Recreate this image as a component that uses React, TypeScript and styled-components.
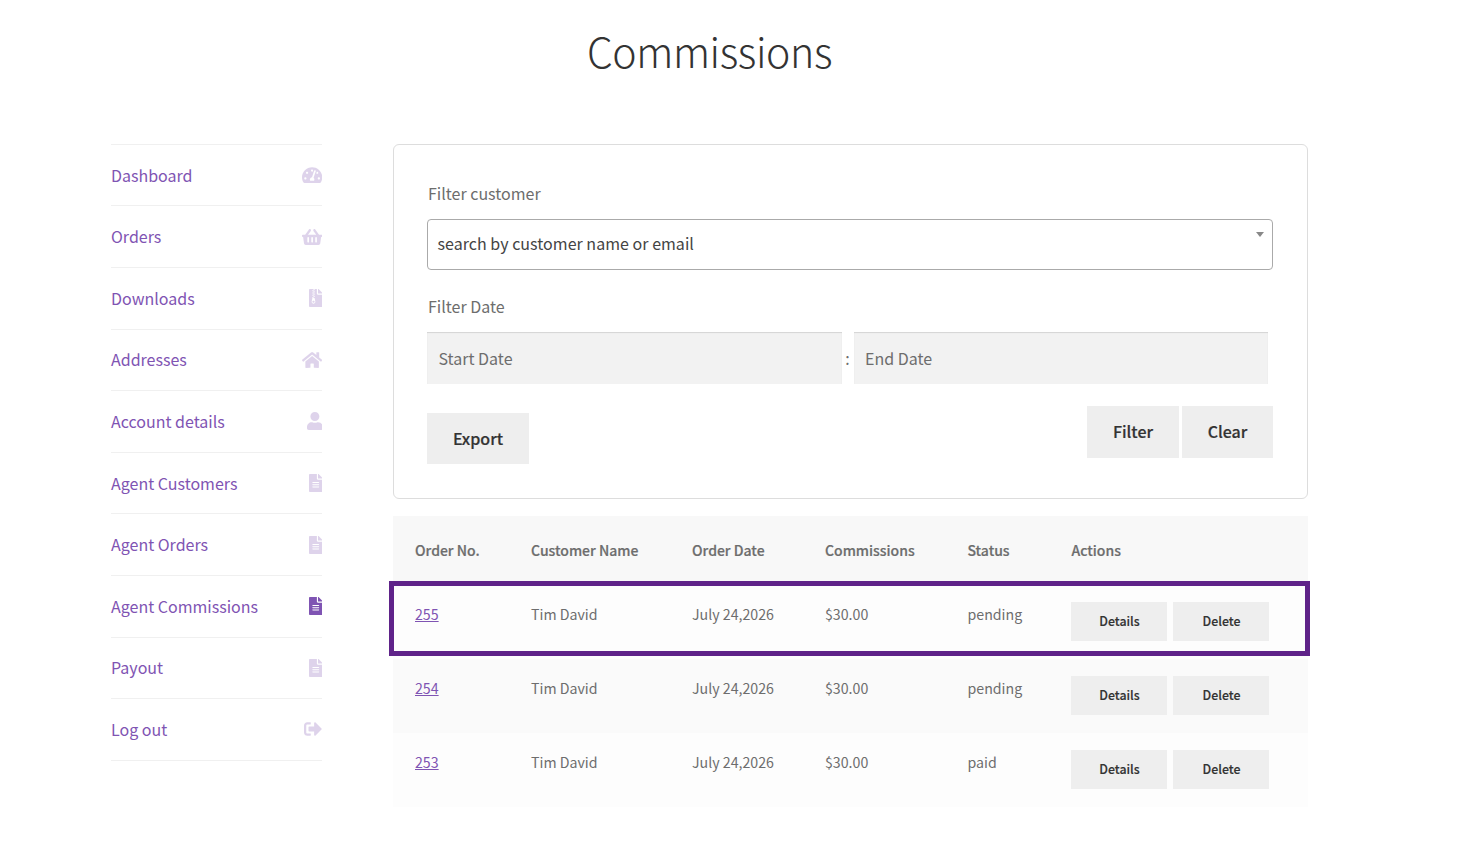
import React from "react";
import styled, { createGlobalStyle } from "styled-components";
import {
  FaTachometerAlt,
  FaShoppingBasket,
  FaFileArchive,
  FaHome,
  FaUser,
  FaFileAlt,
  FaSignOutAlt,
} from "react-icons/fa";

const navItems = [
  { label: "Dashboard", icon: FaTachometerAlt, width: 20.25 },
  { label: "Orders", icon: FaShoppingBasket, width: 20.25 },
  { label: "Downloads", icon: FaFileArchive, width: 13.5 },
  { label: "Addresses", icon: FaHome, width: 20.25 },
  { label: "Account details", icon: FaUser, width: 15.75 },
  { label: "Agent Customers", icon: FaFileAlt, width: 13.5 },
  { label: "Agent Orders", icon: FaFileAlt, width: 13.5 },
  { label: "Agent Commissions", icon: FaFileAlt, width: 13.5, active: true },
  { label: "Payout", icon: FaFileAlt, width: 13.5 },
  { label: "Log out", icon: FaSignOutAlt, width: 18 },
];

const orders = [
  { id: 255, status: "pending" },
  { id: 254, status: "pending" },
  { id: 253, status: "paid" },
];

const columns = [
  "Order No.",
  "Customer Name",
  "Order Date",
  "Commissions",
  "Status",
  "Actions",
];

const App: React.FC = () => {
  return (
    <Page>
      <GlobalStyle />
      <Title>Commissions</Title>
      <Columns>
        <Nav>
          {navItems.map((item) => (
            <NavItem key={item.label}>
              <NavLink href="#">{item.label}</NavLink>
              <NavIcon $active={item.active} $width={item.width}>
                <item.icon />
              </NavIcon>
            </NavItem>
          ))}
        </Nav>
        <Main>
          <FilterCard>
            <FieldLabel>Filter customer</FieldLabel>
            <SelectBox>
              search by customer name or email
              <SelectArrow />
            </SelectBox>
            <DateLabel>Filter Date</DateLabel>
            <DateRow>
              <DateInput placeholder="Start Date" />
              <Colon>:</Colon>
              <DateInput placeholder="End Date" />
            </DateRow>
            <ButtonRow>
              <ExportButton>Export</ExportButton>
              <RightButtons>
                <FilterButton $width={92}>Filter</FilterButton>
                <FilterButton $width={91}>Clear</FilterButton>
              </RightButtons>
            </ButtonRow>
          </FilterCard>
          <Table>
            <HeadRow>
              {columns.map((c) => (
                <HeadCell key={c}>{c}</HeadCell>
              ))}
            </HeadRow>
            {orders.map((order) => (
              <BodyRow key={order.id}>
                <Cell>
                  <OrderLink href="#">{order.id}</OrderLink>
                </Cell>
                <Cell>Tim David</Cell>
                <Cell>July 24,2026</Cell>
                <Cell>$30.00</Cell>
                <Cell>{order.status}</Cell>
                <Actions>
                  <ActionButton>Details</ActionButton>
                  <ActionButton>Delete</ActionButton>
                </Actions>
              </BodyRow>
            ))}
            <Highlight />
          </Table>
        </Main>
      </Columns>
    </Page>
  );
};

const fontStack = `"Noto Sans CJK SC", "Source Sans Pro", "Open Sans", sans-serif`;

const GlobalStyle = createGlobalStyle`
  html, body {
    margin: 0;
    padding: 0;
    background: #fff;
  }
  body {
    font-family: ${fontStack};
    color: #6d6d6d;
  }
  * {
    box-sizing: border-box;
  }
`;

const Page = styled.div`
  width: 1197px;
  margin-left: 111px;
`;

const Title = styled.h1`
  margin: 0;
  height: 144px;
  padding-top: 21px;
  font-size: 41px;
  line-height: 58px;
  font-weight: 300;
  color: #333;
  text-align: center;
  letter-spacing: -0.4px;
`;

const Columns = styled.div`
  display: flex;
  gap: 71px;
  align-items: flex-start;
`;

const Nav = styled.ul`
  width: 211px;
  margin: -0.2px 0 0;
  padding: 0;
  list-style: none;
  border-top: 1px solid #f0f0f0;
`;

const NavItem = styled.li`
  display: flex;
  align-items: center;
  justify-content: space-between;
  height: 61.6px;
  border-bottom: 1px solid #f0f0f0;
`;

const NavLink = styled.a`
  font-size: 16px;
  line-height: 24px;
  margin-top: -1px;
  color: #7f54b3;
  text-decoration: none;
`;

const NavIcon = styled.span<{ $active?: boolean; $width: number }>`
  display: flex;
  align-items: center;
  margin-right: -0.3px;
  color: #7f54b3;
  opacity: ${(props) => (props.$active ? 1 : 0.25)};

  svg {
    width: ${(props) => props.$width}px;
    height: 18px;
  }
`;

const Main = styled.div`
  width: 915px;
`;

const FilterCard = styled.div`
  height: 355px;
  padding: 35px 34px 0 33px;
  border: 1px solid #ddd;
  border-radius: 6px;
`;

const FieldLabel = styled.div`
  height: 39px;
  padding-left: 1px;
  font-size: 16px;
  line-height: 26px;
`;

const SelectBox = styled.div`
  position: relative;
  height: 51px;
  padding-left: 9.5px;
  border: 1px solid #aaa;
  border-radius: 4px;
  font-size: 16px;
  line-height: 46px;
  letter-spacing: 0.03px;
  color: #444;
`;

const SelectArrow = styled.span`
  position: absolute;
  top: 12px;
  right: 8px;
  border-left: 4px solid transparent;
  border-right: 4px solid transparent;
  border-top: 5px solid #888;
`;

const DateLabel = styled(FieldLabel)`
  box-sizing: content-box;
  height: 26px;
  padding-top: 23px;
  padding-bottom: 13px;
`;

const DateRow = styled.div`
  display: flex;
  align-items: center;
  width: 841px;
`;

const DateInput = styled.input`
  flex: 1;
  min-width: 0;
  height: 52px;
  padding: 0 11.5px;
  border: none;
  box-shadow: inset 0 1px 1px rgba(0, 0, 0, 0.125);
  background: #f2f2f2;
  font-family: ${fontStack};
  font-size: 16px;
  color: #6d6d6d;

  &::placeholder {
    color: #6d6d6d;
    opacity: 1;
  }
`;

const Colon = styled.span`
  width: 12px;
  text-align: center;
  font-size: 16px;
`;

const ButtonRow = styled.div`
  display: flex;
  justify-content: space-between;
  align-items: flex-start;
  margin-top: 22px;
`;

const ExportButton = styled.button`
  width: 102px;
  height: 51px;
  margin-top: 7px;
  padding: 0 0 2px;
  border: none;
  background: #eee;
  font-family: ${fontStack};
  font-size: 16px;
  font-weight: 500;
  -webkit-text-stroke: 0.2px #333;
  color: #333;
`;

const RightButtons = styled.div`
  display: flex;
  gap: 3px;
`;

const FilterButton = styled.button<{ $width: number }>`
  width: ${(props) => props.$width}px;
  height: 52px;
  padding: 0 0 2px;
  border: none;
  background: #eee;
  font-family: ${fontStack};
  font-size: 16px;
  font-weight: 500;
  -webkit-text-stroke: 0.2px #333;
  color: #333;
`;

const Table = styled.div`
  position: relative;
  margin-top: 17px;
`;

const gridColumns = "116px 161px 133px 142.5px 104px 1fr";

const HeadRow = styled.div`
  display: grid;
  grid-template-columns: ${gridColumns};
  height: 69px;
  padding: 23px 0 0 22px;
  background: #f8f8f8;
`;

const HeadCell = styled.div`
  font-size: 14px;
  font-weight: 500;
  -webkit-text-stroke: 0.2px #6d6d6d;
  line-height: 22px;
`;

const BodyRow = styled.div`
  display: grid;
  grid-template-columns: ${gridColumns};
  height: 74px;
  padding: 16px 0 0 22px;
  background: #fdfdfd;

  &:nth-child(3) {
    background: #fafafa;
  }
`;

const Cell = styled.div`
  font-size: 14.2px;
  line-height: 26px;
`;

const OrderLink = styled.a`
  color: #7f54b3;
  text-decoration: underline;
`;

const Actions = styled.div`
  display: flex;
  gap: 6px;
  padding-top: 1px;
  margin-left: -0.5px;
`;

const ActionButton = styled.button`
  width: 96px;
  height: 39px;
  border: none;
  padding: 0 0 2px 1px;
  background: #eee;
  font-family: ${fontStack};
  font-size: 12.4px;
  font-weight: 500;
  -webkit-text-stroke: 0.15px #333;
  color: #333;
`;

const Highlight = styled.div`
  position: absolute;
  top: 65px;
  left: -4px;
  width: 921px;
  height: 75px;
  border: 5px solid #5f2389;
  pointer-events: none;
`;

export default App;
